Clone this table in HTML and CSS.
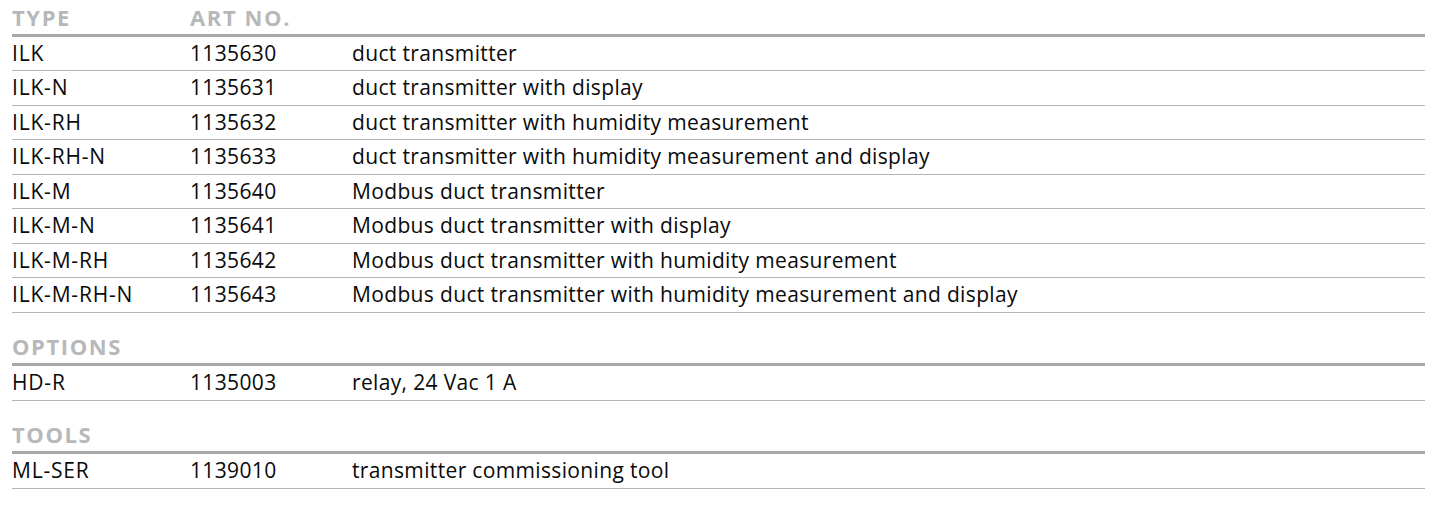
FILE: index.html
```html
<!DOCTYPE html>
<html>
<head>
<meta charset="utf-8">
<link rel="stylesheet" href="styles.css">
</head>
<body>
<div class="sheet">
  <section class="group">
    <div class="head"><span class="c1">TYPE</span><span class="c2">ART NO.</span><span class="c3"></span></div>
    <div class="row"><span class="c1">ILK</span><span class="c2">1135630</span><span class="c3">duct transmitter</span></div>
    <div class="row"><span class="c1">ILK-N</span><span class="c2">1135631</span><span class="c3">duct transmitter with display</span></div>
    <div class="row"><span class="c1">ILK-RH</span><span class="c2">1135632</span><span class="c3">duct transmitter with humidity measurement</span></div>
    <div class="row"><span class="c1">ILK-RH-N</span><span class="c2">1135633</span><span class="c3">duct transmitter with humidity measurement and display</span></div>
    <div class="row"><span class="c1">ILK-M</span><span class="c2">1135640</span><span class="c3">Modbus duct transmitter</span></div>
    <div class="row"><span class="c1">ILK-M-N</span><span class="c2">1135641</span><span class="c3">Modbus duct transmitter with display</span></div>
    <div class="row"><span class="c1">ILK-M-RH</span><span class="c2">1135642</span><span class="c3">Modbus duct transmitter with humidity measurement</span></div>
    <div class="row"><span class="c1">ILK-M-RH-N</span><span class="c2">1135643</span><span class="c3">Modbus duct transmitter with humidity measurement and display</span></div>
  </section>
  <section class="group">
    <div class="head"><span class="c1">OPTIONS</span></div>
    <div class="row"><span class="c1">HD-R</span><span class="c2">1135003</span><span class="c3">relay, 24 Vac 1 A</span></div>
  </section>
  <section class="group">
    <div class="head"><span class="c1">TOOLS</span></div>
    <div class="row"><span class="c1">ML-SER</span><span class="c2">1139010</span><span class="c3">transmitter commissioning tool</span></div>
  </section>
</div>
</body>
</html>
```
FILE: styles.css
```css
html, body {
  margin: 0;
  padding: 0;
  background: #ffffff;
}
.sheet {
  width: 1413px;
  margin-left: 12px;
  font-family: "Open Sans", "Liberation Sans", sans-serif;
  font-size: 21px;
  color: #0a0a0a;
}
.group + .group {
  margin-top: 17px;
}
.head, .row {
  display: grid;
  grid-template-columns: 178px 162px 1fr;
  align-items: center;
}
.head {
  box-sizing: border-box;
  height: 36.5px;
  padding-bottom: 0;
  border-bottom: 3px solid #a7a9ac;
  font-size: 22px;
  font-weight: 700;
  color: #b7b8ba;
  letter-spacing: 1.6px;
}
.row {
  box-sizing: border-box;
  height: 34.5px;
  padding-bottom: 1px;
  border-bottom: 1px solid #b4b4b4;
  letter-spacing: 0.35px;
}
.row .c1 {
  letter-spacing: 0.8px;
}
.c1, .c2, .c3 {
  white-space: nowrap;
}
```
